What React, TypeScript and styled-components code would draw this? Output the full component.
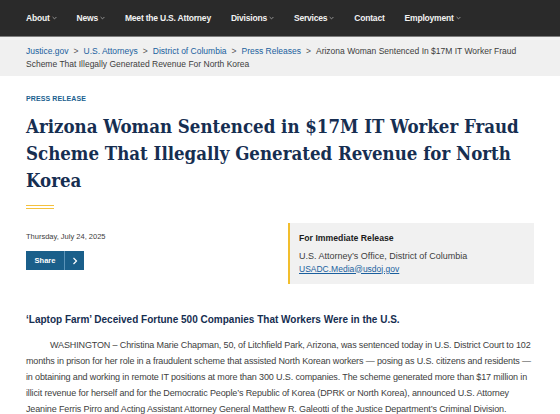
import React from 'react';
import styled, { createGlobalStyle } from 'styled-components';

const GlobalStyle = createGlobalStyle`
    html, body {
        margin: 0;
        padding: 0;
        background: #ffffff;
        font-family: 'Liberation Sans', Arial, sans-serif;
    }
`;

const NAV_ITEMS = [
    { label: 'About', menu: true },
    { label: 'News', menu: true },
    { label: 'Meet the U.S. Attorney', menu: false },
    { label: 'Divisions', menu: true },
    { label: 'Services', menu: true },
    { label: 'Contact', menu: false },
    { label: 'Employment', menu: true },
];

const CRUMBS = ['Justice.gov', 'U.S. Attorneys', 'District of Columbia', 'Press Releases'];

const Chevron: React.FC = () => (
    <svg width="5" height="4" viewBox="0 0 5 4" fill="none">
        <path d="M0.6 1 2.5 2.9 4.4 1" stroke="#a0a0a0" strokeWidth="0.9" />
    </svg>
);

const App: React.FC = () => {
    return (
        <>
            <GlobalStyle />
            <Nav>
                {NAV_ITEMS.map((item) => (
                    <NavItem key={item.label}>
                        {item.label}
                        {item.menu && <Chevron />}
                    </NavItem>
                ))}
            </Nav>
            <Breadcrumbs>
                {CRUMBS.map((c) => (
                    <React.Fragment key={c}>
                        <CrumbLink>{c}</CrumbLink>
                        <Sep>&gt;</Sep>
                    </React.Fragment>
                ))}
                Arizona Woman Sentenced In $17M IT Worker Fraud Scheme That Illegally Generated Revenue For North Korea
            </Breadcrumbs>
            <Main>
                <Eyebrow>PRESS RELEASE</Eyebrow>
                <Title>Arizona Woman Sentenced in $17M IT Worker Fraud Scheme That Illegally Generated Revenue for North Korea</Title>
                <Rule />
                <MetaRow>
                    <MetaLeft>
                        <DateText>Thursday, July 24, 2025</DateText>
                        <ShareButton>
                            <ShareLabel>Share</ShareLabel>
                            <ShareArrow>
                                <svg width="6" height="8" viewBox="0 0 6 8" fill="none">
                                    <path d="M1.5 1 4.5 4 1.5 7" stroke="#fff" strokeWidth="1.2" />
                                </svg>
                            </ShareArrow>
                        </ShareButton>
                    </MetaLeft>
                    <ContactBox>
                        <ContactTitle>For Immediate Release</ContactTitle>
                        <ContactLine>U.S. Attorney’s Office, District of Columbia</ContactLine>
                        <ContactLink>USADC.Media@usdoj.gov</ContactLink>
                    </ContactBox>
                </MetaRow>
                <SubHeading>‘Laptop Farm’ Deceived Fortune 500 Companies That Workers Were in the U.S.</SubHeading>
                <Body>
                    WASHINGTON – Christina Marie Chapman, 50, of Litchfield Park, Arizona, was sentenced today in U.S. District Court to 102
                    months in prison for her role in a fraudulent scheme that assisted North Korean workers — posing as U.S. citizens and residents —
                    in obtaining and working in remote IT positions at more than 300 U.S. companies. The scheme generated more than $17 million in
                    illicit revenue for herself and for the Democratic People’s Republic of Korea (DPRK or North Korea), announced U.S. Attorney
                    Jeanine Ferris Pirro and Acting Assistant Attorney General Matthew R. Galeotti of the Justice Department’s Criminal Division.
                </Body>
            </Main>
        </>
    );
};

const Nav = styled.nav`
    display: flex;
    align-items: center;
    gap: 20px;
    height: 36px;
    padding: 0 0 0 26px;
    background: #2a2a2a;
    border-bottom: 1px solid #7d7d7d;
`;

const NavItem = styled.div`
    display: flex;
    align-items: center;
    gap: 2px;
    font-size: 8.5px;
    font-weight: 700;
    letter-spacing: -0.2px;
    color: #f2f2f2;
    white-space: nowrap;
`;

const Breadcrumbs = styled.div`
    background: #f0f0f0;
    padding: 8px 26px 6px 26px;
    font-size: 8.5px;
    line-height: 12.5px;
    color: #3d3d3d;
`;

const CrumbLink = styled.a`
    color: #1a5f9e;
    text-decoration: none;
`;

const Sep = styled.span`
    margin: 0 5px;
    color: #555;
`;

const Main = styled.main`
    padding: 18px 26px 0;
`;

const Eyebrow = styled.div`
    font-size: 7px;
    line-height: 10px;
    font-weight: 700;
    letter-spacing: 0.1px;
    color: #1a5f8f;
`;

const Title = styled.h1`
    margin: 9px 0 0;
    font-family: 'DejaVu Serif Condensed', 'DejaVu Serif', serif;
    font-size: 18.5px;
    font-weight: 600;
    line-height: 27px;
    color: #162e51;
`;

const Rule = styled.div`
    width: 28px;
    height: 2px;
    margin-top: 11px;
    border-top: 1px solid #f4c13d;
    border-bottom: 1px solid #f4c13d;
`;

const MetaRow = styled.div`
    display: flex;
    justify-content: space-between;
    margin-top: 14px;
`;

const MetaLeft = styled.div`
    display: flex;
    flex-direction: column;
    padding-top: 9px;
`;

const DateText = styled.div`
    font-size: 7.5px;
    line-height: 10px;
    color: #3d3d3d;
`;

const ShareButton = styled.div`
    display: flex;
    width: 58px;
    height: 19px;
    margin-top: 9px;
    background: #1a5f8a;
    color: #fff;
`;

const ShareLabel = styled.div`
    flex: 1;
    display: flex;
    align-items: center;
    justify-content: center;
    font-size: 7.5px;
    font-weight: 700;
    border-right: 1px solid #5a93b8;
`;

const ShareArrow = styled.div`
    width: 19px;
    display: flex;
    align-items: center;
    justify-content: center;
`;

const ContactBox = styled.div`
    box-sizing: border-box;
    width: 246px;
    padding: 9px 0 8px 9px;
    background: #f1f1f1;
    border-left: 2px solid #f2be2d;
    color: #3d3d3d;
`;

const ContactTitle = styled.div`
    font-size: 8.7px;
    line-height: 12px;
    font-weight: 700;
    color: #1b1b1b;
    margin-bottom: 5.5px;
`;

const ContactLine = styled.div`
    font-size: 9px;
    line-height: 13px;
`;

const ContactLink = styled.a`
    display: block;
    font-size: 8.5px;
    line-height: 13px;
    color: #1a5f9e;
    text-decoration: underline;
`;

const SubHeading = styled.h2`
    margin: 29.5px 0 0;
    font-size: 10px;
    line-height: 13px;
    font-weight: 700;
    color: #162e51;
`;

const Body = styled.p`
    margin: 10.5px 0 0;
    font-size: 9px;
    line-height: 16px;
    letter-spacing: -0.13px;
    text-indent: 24px;
    color: #404040;
`;

export default App;
